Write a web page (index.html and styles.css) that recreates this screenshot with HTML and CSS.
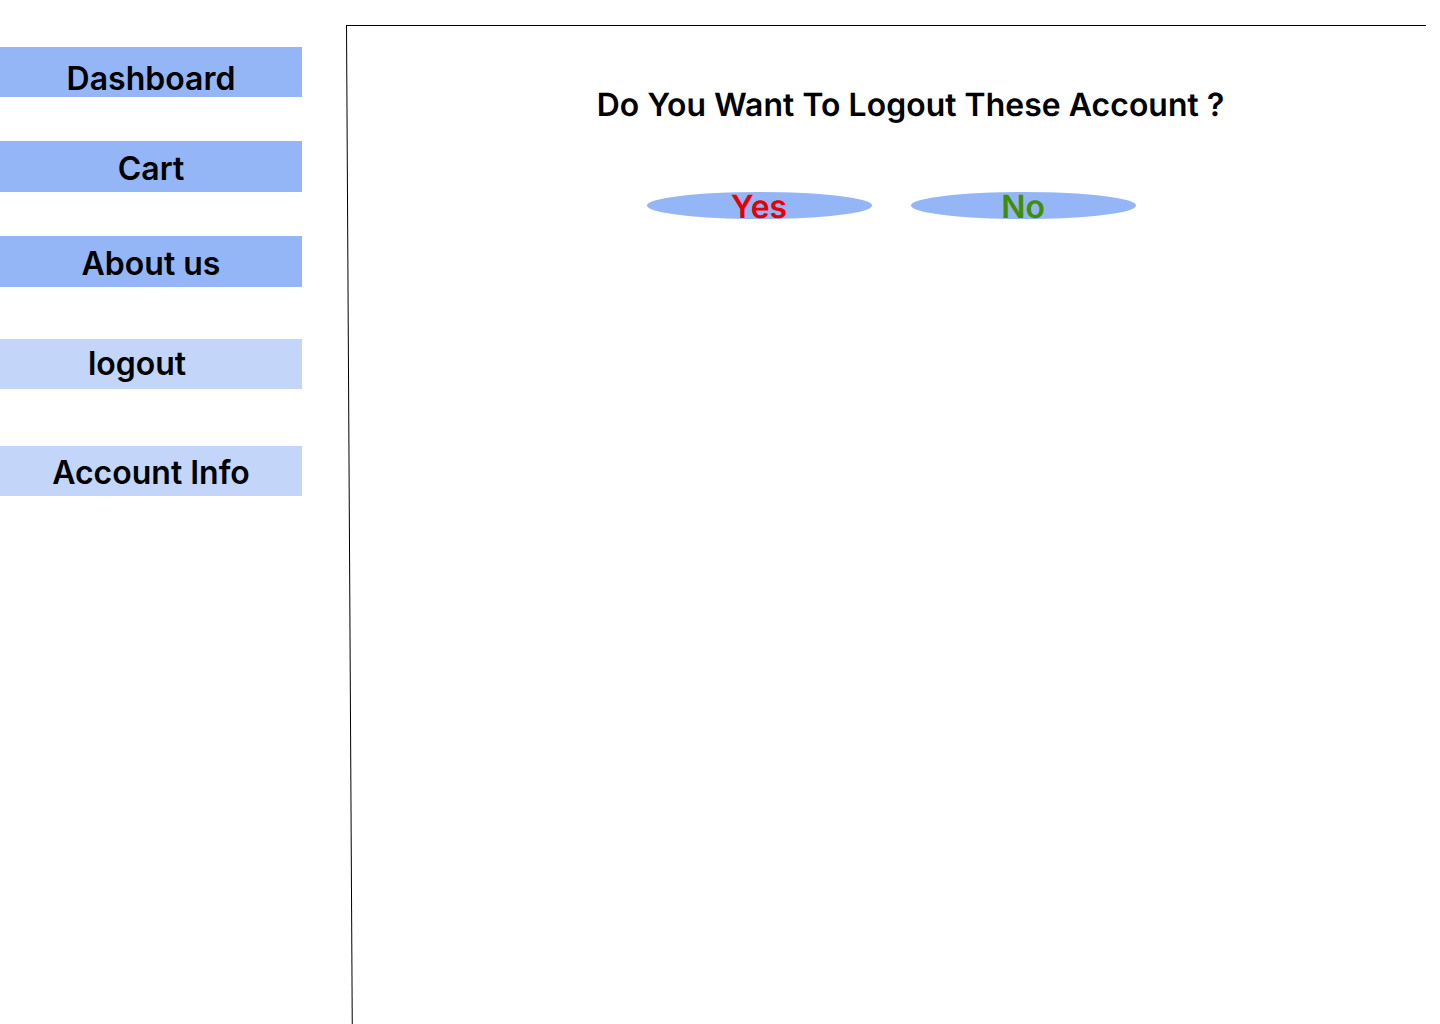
FILE: index.html
```html
<!DOCTYPE html>
<html>
<head>
<meta charset="utf-8">
<link rel="stylesheet" href="styles.css">
</head>
<body>
<div class="page">
  <nav class="sidebar">
    <div class="nav-item dark dashboard">Dashboard</div>
    <div class="nav-item dark cart">Cart</div>
    <div class="nav-item dark about">About us</div>
    <div class="nav-item light logout"><span class="logout-label">logout</span></div>
    <div class="nav-item light account">Account Info</div>
  </nav>
  <main class="panel">
    <h1 class="question">Do You Want To Logout These Account ?</h1>
    <div class="choices">
      <button class="choice yes">Yes</button>
      <button class="choice no">No</button>
    </div>
  </main>
</div>
</body>
</html>
```
FILE: styles.css
```css
html, body {
  margin: 0;
  padding: 0;
  background: #ffffff;
  overflow: hidden;
}
body {
  font-family: Inter, "Noto Sans", sans-serif;
  color: #000;
  width: 1440px;
  height: 1024px;
}
.page {
  display: flex;
  align-items: flex-start;
  height: 1024px;
}
.sidebar {
  width: 302px;
  flex: none;
  display: flex;
  flex-direction: column;
  padding-top: 47px;
}
.nav-item {
  height: 50px;
  box-sizing: border-box;
  display: flex;
  align-items: center;
  justify-content: center;
  font-size: 32px;
  font-weight: 600;
  line-height: 38px;
  padding-top: 1px;
}
.dark { background: #95b6f6; }
.light { background: #c3d6f9; }
.dashboard { padding-top: 14px; }
.cart { margin-top: 44px; height: 51px; padding-top: 5px; }
.about { margin-top: 44px; height: 51px; padding-top: 4px; }
.logout { margin-top: 52px; padding-top: 0; }
.logout-label { margin-right: 28px; }
.account { margin-top: 57px; padding-top: 3px; }

.panel {
  margin-left: 44px;
  margin-top: 25px;
  width: 1080px;
  height: 1010px;
  box-sizing: border-box;
  border-top: 1.3px solid #000;
  border-left: 1.3px solid #000;
  transform: skewX(0.33deg);
  transform-origin: top left;
}
.question {
  margin: 0;
  padding-top: 60px;
  padding-left: 47px;
  text-align: center;
  font-size: 32px;
  font-weight: 600;
  line-height: 38px;
}
.choices {
  display: flex;
  justify-content: center;
  gap: 39px;
  margin-top: 68px;
  padding-left: 7px;
}
.choice {
  width: 225px;
  height: 27px;
  border: none;
  border-radius: 50%;
  background: #95b6f6;
  padding: 0;
  font-family: Inter, "Noto Sans", sans-serif;
  font-size: 32px;
  font-weight: 600;
  line-height: 27px;
  display: flex;
  align-items: center;
  justify-content: center;
  padding-top: 1px;
  box-sizing: border-box;
  overflow: visible;
}
.yes { color: #e60000; }
.no { color: #3f8f00; }
```
